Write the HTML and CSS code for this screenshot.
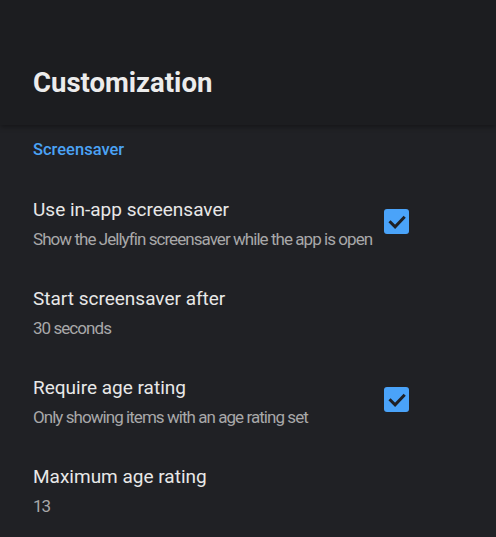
FILE: index.html
```html
<!DOCTYPE html>
<html>
<head>
<meta charset="utf-8">
<link rel="stylesheet" href="styles.css">
</head>
<body>
<header class="header">
  <h1 class="title">Customization</h1>
</header>
<main class="content">
  <div class="section-title">Screensaver</div>
  <div class="row">
    <div class="text">
      <div class="label">Use in-app screensaver</div>
      <div class="desc">Show the Jellyfin screensaver while the app is open</div>
    </div>
    <div class="check">
      <svg viewBox="0 0 25 25" width="25" height="25"><path d="M5.5 12.2l5.6 5.6 9.6-10" fill="none" stroke="#1f2024" stroke-width="3" stroke-linecap="butt" stroke-linejoin="miter"/></svg>
    </div>
  </div>
  <div class="row">
    <div class="text">
      <div class="label">Start screensaver after</div>
      <div class="desc">30 seconds</div>
    </div>
  </div>
  <div class="row">
    <div class="text">
      <div class="label">Require age rating</div>
      <div class="desc">Only showing items with an age rating set</div>
    </div>
    <div class="check">
      <svg viewBox="0 0 25 25" width="25" height="25"><path d="M5.5 12.2l5.6 5.6 9.6-10" fill="none" stroke="#1f2024" stroke-width="3" stroke-linecap="butt" stroke-linejoin="miter"/></svg>
    </div>
  </div>
  <div class="row">
    <div class="text">
      <div class="label">Maximum age rating</div>
      <div class="desc">13</div>
    </div>
  </div>
</main>
</body>
</html>
```
FILE: styles.css
```css
html, body {
  margin: 0;
  padding: 0;
  background: #202125;
  font-family: Roboto, "Liberation Sans", sans-serif;
  height: 100%;
  overflow: hidden;
}
.header {
  height: 125px;
  background: #1c1d20;
  box-shadow: 0 2px 5px rgba(0,0,0,0.35);
  position: relative;
  z-index: 1;
  display: flex;
  align-items: flex-end;
  padding: 0 33px 26px;
  box-sizing: border-box;
}
.title {
  margin: 0;
  font-size: 27.5px;
  font-weight: 700;
  color: #ececec;
  line-height: 32px;
}
.content {
  padding: 15px 33px 0;
}
.section-title {
  color: #4ba3f5;
  font-size: 16.5px;
  font-weight: 500;
  line-height: 20px;
  margin-bottom: 39px;
}
.row {
  display: flex;
  width: 376px;
  height: 89px;
  align-items: flex-start;
}
.text {
  flex: 1;
}
.label {
  color: #e8e8e8;
  font-size: 19px;
  line-height: 22px;
}
.desc {
  color: #a8a8a9;
  font-size: 17px;
  line-height: 24px;
  letter-spacing: -0.95px;
  margin-top: 6px;
}
.check {
  width: 25px;
  height: 25px;
  border-radius: 3px;
  background: #4aa3f9;
  margin-top: 10px;
}
.check svg {
  display: block;
}
```
